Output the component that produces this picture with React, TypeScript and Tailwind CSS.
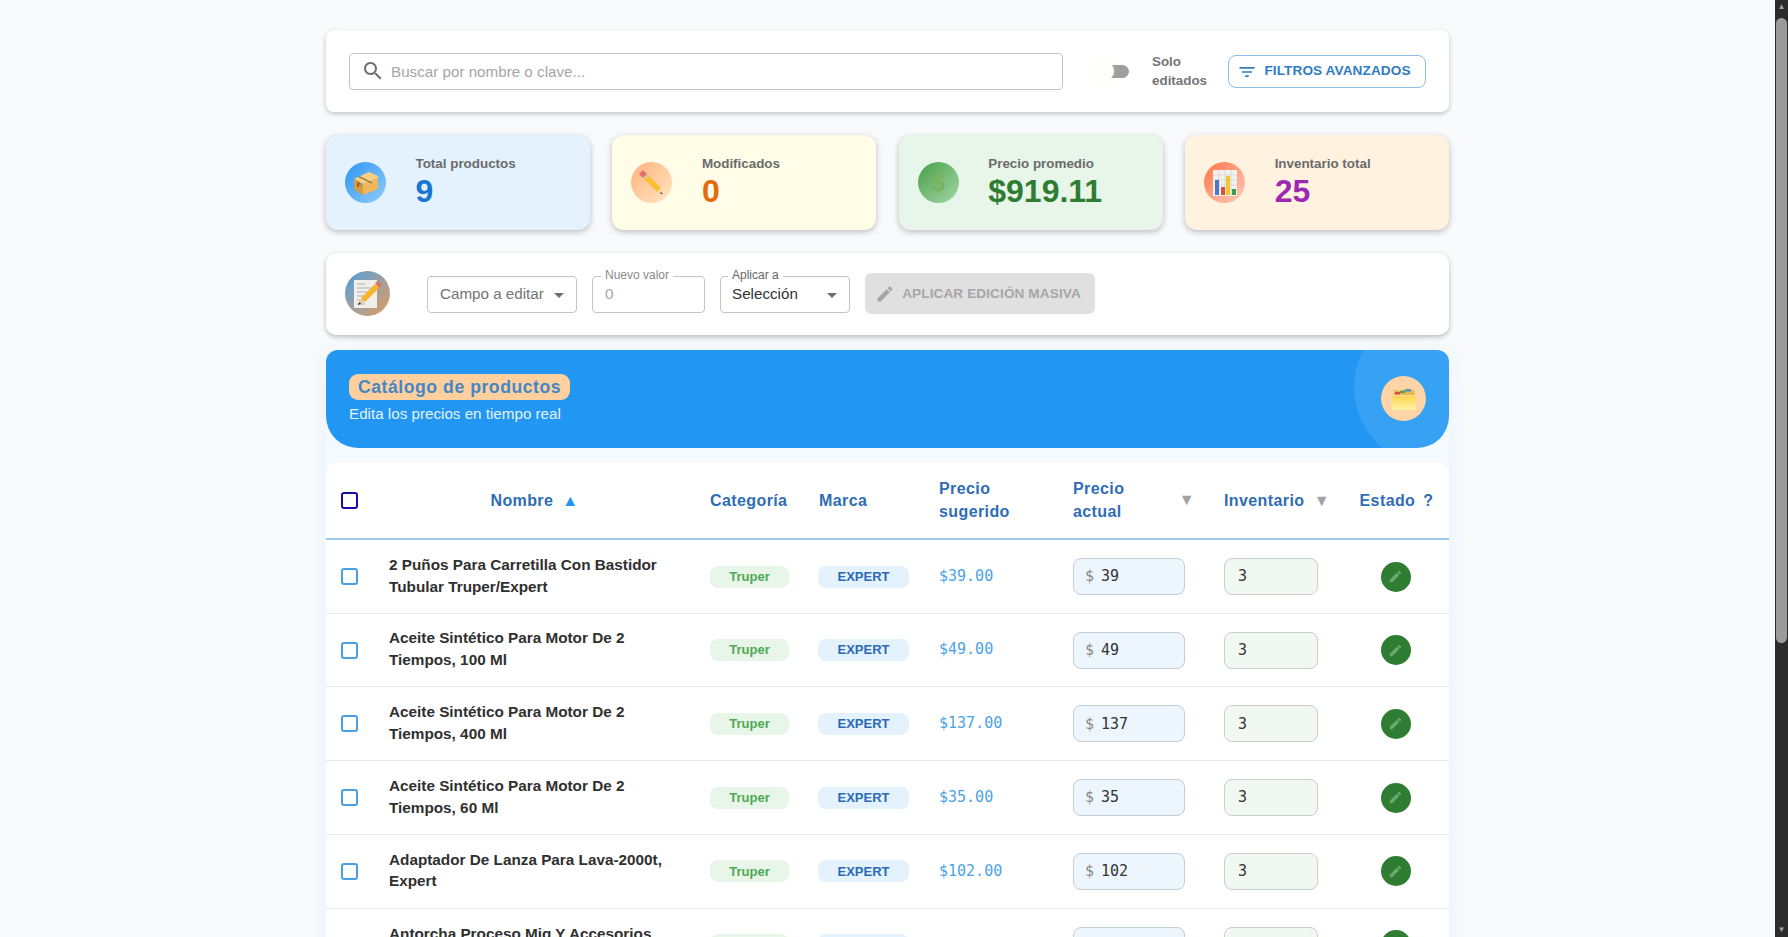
import { Fragment } from "react"

// material icon paths
const SEARCH = "M15.5 14h-.79l-.28-.27C15.41 12.59 16 11.11 16 9.5 16 5.91 13.09 3 9.5 3S3 5.91 3 9.5 5.91 16 9.5 16c1.61 0 3.09-.59 4.23-1.57l.27.28v.79l5 4.99L20.49 19l-4.99-5zm-6 0C7.01 14 5 11.99 5 9.5S7.01 5 9.5 5 14 7.01 14 9.5 11.99 14 9.5 14z"
const FILTER = "M10 18h4v-2h-4v2zM3 6v2h18V6H3zm3 7h12v-2H6v2z"
const EDIT = "M3 17.25V21h3.75L17.81 9.94l-3.75-3.75L3 17.25zM20.71 7.04c.39-.39.39-1.02 0-1.41l-2.34-2.34c-.39-.39-1.02-.39-1.41 0l-1.83 1.83 3.75 3.75 1.83-1.83z"
const ARROW = "M7 10l5 5 5-5z"

function Icon({ d, className }: { d: string; className: string }) {
    return (
        <svg viewBox="0 0 24 24" fill="currentColor" className={className}>
            <path d={d} />
        </svg>
    )
}

function BoxEmoji() {
    return (
        <svg viewBox="0 0 26 26" className="w-[26px] h-[26px]">
            <path d="M1 9 L16 2 L25 6 L25 8 L10 14 Z" fill="#f7cf85" />
            <path d="M1 9 L10 14 L10 25 L1 19 Z" fill="#d79a45" />
            <path d="M10 14 L25 8 L25 19 L10 25 Z" fill="#efb65a" />
            <path d="M6 6.6 L19 13 M4 12 L8 14.5" stroke="#8a6a35" strokeWidth="1.2" fill="none" />
            <path d="M5 13.5 L5 17" stroke="#7a5a30" strokeWidth="1.6" />
        </svg>
    )
}

function PencilEmoji() {
    return (
        <svg viewBox="0 0 28 28" className="w-[28px] h-[28px]">
            <path d="M1 5 L5 1 L9 5 L5 9 Z" fill="#e2706d" />
            <path d="M5 9 L9 5 L10.5 6.5 L6.5 10.5 Z" fill="#c9c2b0" />
            <path d="M6.5 10.5 L10.5 6.5 L23 19 L19 23 Z" fill="#fbc02d" />
            <path d="M19 23 L23 19 L25 25 Z" fill="#f0d6a8" />
            <path d="M23 23 L25 25 L22 24.4 Z" fill="#444" />
        </svg>
    )
}

function ChartEmoji() {
    return (
        <svg viewBox="0 0 24 26" className="w-[24px] h-[26px]">
            <rect x="0" y="0" width="24" height="26" fill="#f3f1ee" />
            <path d="M0 5H24M0 10H24M0 15H24M0 20H24M6 0V26M12 0V26M18 0V26" stroke="#d2cfcc" strokeWidth="0.6" />
            <rect x="2" y="10" width="4" height="15" fill="#4a78c9" />
            <rect x="8" y="17" width="4" height="8" fill="#d9503f" />
            <rect x="13" y="6" width="4" height="19" fill="#f0c52e" />
            <rect x="19" y="19" width="4" height="6" fill="#3f9a4c" />
        </svg>
    )
}

function MemoEmoji() {
    return (
        <svg viewBox="0 0 30 30" className="w-[30px] h-[30px]">
            <rect x="1" y="1" width="23" height="28" fill="#f1efe9" />
            <path d="M4 5H12M4 9H21M4 13H21M4 17H14M4 21H10M4 25H12" stroke="#a9b0b5" strokeWidth="1" />
            <path d="M22 4 L25 2 L29 6 L26 9 Z" fill="#e2706d" />
            <path d="M22 5 L26 9 L12 23 L8 19 Z" fill="#f6b32b" />
            <path d="M8 19 L12 23 L5 26 Z" fill="#e8cfa0" />
            <path d="M6.4 23 L8 24.8 L5 26 Z" fill="#333" />
        </svg>
    )
}

function FolderEmoji() {
    return (
        <svg viewBox="0 0 26 22" className="w-[26px] h-[22px]">
            <defs>
                <linearGradient id="folderBody" x1="0" y1="0" x2="0" y2="1">
                    <stop offset="0" stopColor="#ffd54f" />
                    <stop offset="1" stopColor="#fff3a6" />
                </linearGradient>
            </defs>
            <path d="M3 7 L3 2 L10 3 L16 0.5 L23 2 L24 7 Z" fill="#e8b84a" />
            <rect x="4" y="4" width="5" height="2.4" fill="#d9503f" />
            <rect x="9" y="2.6" width="5" height="2.4" fill="#55a04f" />
            <rect x="14" y="1.2" width="6" height="2.4" fill="#5b8fd0" />
            <path d="M1 8 H25 V22 H1 Z" fill="url(#folderBody)" />
        </svg>
    )
}

const stats = [
    { label: "Total productos", value: "9", card: "bg-[#e3f2fd]", text: "text-[#1976d2]", circle: "from-[#2196f3] to-[#90caf9]", icon: <BoxEmoji /> },
    { label: "Modificados", value: "0", card: "bg-[#fffde7]", text: "text-[#e66a0c]", circle: "from-[#ffb27a] to-[#ffe6c4]", icon: <PencilEmoji /> },
    { label: "Precio promedio", value: "$919.11", card: "bg-[#e8f5e9]", text: "text-[#2e7d32]", circle: "from-[#43a047] to-[#a5d6a7]", icon: <span className="text-[24px] font-bold leading-none text-[#7ab35c]">$</span> },
    { label: "Inventario total", value: "25", card: "bg-[#fff3e0]", text: "text-[#9c27b0]", circle: "from-[#ff7043] to-[#ffccbc]", icon: <ChartEmoji /> },
]

// the last row is cut by the window, only its first line shows
const products = [
    { name: "2 Puños Para Carretilla Con Bastidor Tubular Truper/Expert", price: "39" },
    { name: "Aceite Sintético Para Motor De 2 Tiempos, 100 Ml", price: "49" },
    { name: "Aceite Sintético Para Motor De 2 Tiempos, 400 Ml", price: "137" },
    { name: "Aceite Sintético Para Motor De 2 Tiempos, 60 Ml", price: "35" },
    { name: "Adaptador De Lanza Para Lava-2000t, Expert", price: "102" },
    { name: "Antorcha Proceso Mig Y Accesorios\n\u00a0", price: "" },
]

function Checkbox({ header }: { header?: boolean }) {
    return (
        <div className={`w-[17px] h-[17px] rounded-[3px] border-2 ${header ? "border-[#1a0fa5]" : "border-[#4a9fe3]"}`} />
    )
}

function Sort({ up }: { up?: boolean }) {
    return <span className={`text-[16px] ${up ? "text-[#2196f3]" : "text-[#a3a3a3]"}`}>{up ? "▲" : "▼"}</span>
}

export default function App() {
    return (
        <div className="flex h-screen overflow-hidden bg-[#f8fafc] font-['Liberation_Sans',Arial,sans-serif]">
            <main className="flex-1 overflow-hidden">
                <div className="w-[1123px] mx-auto pt-[30px] flex flex-col">
                    <div className="bg-white rounded-[8px] h-[82px] px-[23px] flex items-center shadow-[0_2px_5px_rgba(0,0,0,0.22)]">
                        <div className="w-[714px] h-[37px] border border-[#c4c4c4] rounded-[4px] flex items-center pl-[11px] gap-[6px]">
                            <Icon d={SEARCH} className="w-[24px] h-[24px] text-[#6f6f6f]" />
                            <input placeholder="Buscar por nombre o clave..." className="flex-1 text-[15.2px] pt-[2px] outline-none placeholder:text-[#a6a6a6]" />
                        </div>
                        <div className="relative ml-[31px] w-[35px] h-[13px] flex justify-end">
                            <div className="w-[28px] h-[13px] rounded-full bg-[#9e9e9e]" />
                            <div className="absolute left-0 top-[-4px] w-[20px] h-[20px] rounded-full bg-[#fffffa] shadow-[0_0_3px_rgba(255,235,170,0.45)]" />
                        </div>
                        <div className="ml-[23px] w-[62px] text-[13.4px] leading-[19px] font-bold text-[#757575]">Solo editados</div>
                        <button className="ml-[14px] w-[198px] h-[33px] rounded-[8px] border border-[#8dbde8] pr-[6px] pt-[1px] flex items-center justify-center gap-[7px] text-[#2f7bc4] text-[13.6px] font-bold tracking-[0.1px]">
                            <Icon d={FILTER} className="w-[20px] h-[20px]" />
                            FILTROS AVANZADOS
                        </button>
                    </div>

                    <div className="mt-[23px] grid grid-cols-4 gap-[22.5px]">
                        {stats.map((s) => (
                            <div key={s.label} className={`${s.card} h-[95px] rounded-[12px] flex items-center pl-[19px] shadow-[0_2px_6px_rgba(0,0,0,0.25)]`}>
                                <div className={`w-[41px] h-[41px] rounded-full bg-linear-to-br ${s.circle} flex items-center justify-center`}>
                                    {s.icon}
                                </div>
                                <div className="ml-[29.5px] mt-[-4px]">
                                    <div className="text-[13.4px] leading-[20px] font-bold text-[#6b6b6b]">{s.label}</div>
                                    <div className={`text-[32px] leading-[34px] font-bold ${s.text}`}>{s.value}</div>
                                </div>
                            </div>
                        ))}
                    </div>

                    <div className="mt-[23px] bg-white rounded-[10px] h-[82px] pl-[19px] pb-[1px] flex items-center shadow-[0_2px_5px_rgba(0,0,0,0.25)]">
                        <div className="w-[45px] h-[45px] rounded-full bg-linear-to-br from-[#3e9bdc] to-[#e09a55] flex items-center justify-center">
                            <MemoEmoji />
                        </div>
                        <div className="ml-[37px] mt-[2px] w-[150px] h-[37px] border border-[#c4c4c4] rounded-[4px] flex items-center pl-[12px] pr-[5px] justify-between text-[15.2px] whitespace-nowrap text-[#757575]">
                            Campo a editar
                            <Icon d={ARROW} className="w-[24px] h-[24px] text-[#6f6f6f]" />
                        </div>
                        <div className="relative ml-[15px] mt-[2px] w-[113px] h-[37px] border border-[#c4c4c4] rounded-[4px] flex items-center pl-[12px]">
                            <span className="absolute left-[8px] top-[-9px] bg-white px-[4px] text-[12px] leading-[14px] text-[#8a8a8a]">Nuevo valor</span>
                            <input placeholder="0" className="w-full text-[15.2px] outline-none placeholder:text-[#a6a6a6]" />
                        </div>
                        <div className="relative ml-[15px] mt-[2px] w-[130px] h-[37px] border border-[#c4c4c4] rounded-[4px] flex items-center pl-[11px] pr-[5px] justify-between text-[15.2px] text-[#333333]">
                            <span className="absolute left-[7px] top-[-9px] bg-white px-[4px] text-[12px] leading-[14px] text-[#666666]">Aplicar a</span>
                            Selección
                            <Icon d={ARROW} className="w-[24px] h-[24px] text-[#6f6f6f]" />
                        </div>
                        <button className="ml-[15px] w-[230px] h-[41px] rounded-[6px] bg-[#e0e0e0] pr-[4px] pt-[1px] flex items-center justify-center gap-[7px] text-[#a6a6a6] text-[13.6px] font-bold tracking-[0.1px]">
                            <Icon d={EDIT} className="w-[20px] h-[20px]" />
                            APLICAR EDICIÓN MASIVA
                        </button>
                    </div>

                    <div className="mt-[15px] bg-[#f5faff] rounded-[12px] shadow-[0_4px_24px_rgba(33,150,243,0.07)]">
                        <div className="relative overflow-hidden h-[98px] bg-[#2196f3] rounded-t-[12px] rounded-b-[32px] pl-[23px] pt-[24px]">
                            <div className="absolute top-[-43px] right-[-65px] w-[160px] h-[160px] rounded-full bg-white/10" />
                            <div className="flex">
                                <div className="h-[26px] rounded-[9px] bg-[#ffcf9e] px-[9px] text-[17.6px] leading-[27px] font-bold tracking-[0.55px] text-[#4586c4]">Catálogo de productos</div>
                            </div>
                            <div className="mt-[4px] text-[15.2px] leading-[20px] text-[#e3f2fd]">Edita los precios en tiempo real</div>
                            <div className="absolute right-[23px] top-[26px] w-[45px] h-[45px] rounded-full bg-[#ffd4a6] flex items-center justify-center">
                                <FolderEmoji />
                            </div>
                        </div>

                        <div className="mt-[15px] bg-white rounded-t-[10px]">
                            <table className="w-full table-fixed">
                                <colgroup>
                                    <col className="w-[48px]" />
                                    <col className="w-[320px]" />
                                    <col className="w-[108px]" />
                                    <col className="w-[121px]" />
                                    <col className="w-[134px]" />
                                    <col className="w-[151px]" />
                                    <col className="w-[136px]" />
                                    <col />
                                </colgroup>
                                <thead>
                                    <tr className="h-[76.4px] border-b-2 border-[#9ccbef] text-[16px] leading-[23px] font-bold tracking-[0.4px] text-[#2f6db5]">
                                        <th className="pl-[15px]"><Checkbox header /></th>
                                        <th className="pl-[1px] font-bold">
                                            <div className="flex justify-center items-center gap-[9px]">Nombre <Sort up /></div>
                                        </th>
                                        <th className="pl-[16px] text-left font-bold">Categoría</th>
                                        <th className="pl-[17px] text-left font-bold">Marca</th>
                                        <th className="pl-[16px] pb-[2px] text-left font-bold">Precio<br />sugerido</th>
                                        <th className="px-[16px] pb-[2px] text-left font-bold">
                                            <div className="flex justify-between items-center">
                                                <span>Precio<br />actual</span>
                                                <span className="mr-[-3px]"><Sort /></span>
                                            </div>
                                        </th>
                                        <th className="px-[16px] text-left font-bold">
                                            <div className="flex justify-between items-center">Inventario <span className="mr-[-2px]"><Sort /></span></div>
                                        </th>
                                        <th colSpan={2} className="font-bold">
                                            <div className="flex justify-center gap-[8px]">Estado <span>?</span></div>
                                        </th>
                                    </tr>
                                </thead>
                                <tbody>
                                    {products.map((p) => (
                                        <Fragment key={p.name}>
                                            <tr className="h-[73.8px] border-b border-[#e6e8ea]">
                                                <td className="pl-[15px]"><Checkbox /></td>
                                                <td className="pl-[15px] pr-[16px] pb-[2px] text-[15.3px] leading-[21.7px] font-bold text-[#303030] whitespace-pre-line">{p.name}</td>
                                                <td className="pl-[16px]">
                                                    <div className="w-[79px] h-[22px] rounded-[8px] bg-[#e8f5e9] text-[#4fa954] text-[13px] font-bold flex items-center justify-center">Truper</div>
                                                </td>
                                                <td className="pl-[16px]">
                                                    <div className="w-[91px] h-[22px] rounded-[8px] bg-[#e3f2fd] text-[#2a6ab5] text-[13px] font-bold flex items-center justify-center">EXPERT</div>
                                                </td>
                                                <td className="pl-[16px] pb-[1px] font-['DejaVu_Sans_Mono',monospace] text-[15px] text-[#4aa3e8]">{p.price ? `$${p.price}.00` : ""}</td>
                                                <td className="pl-[16px]">
                                                    <div className="w-[112px] h-[37px] rounded-[8px] border border-[#c4ccd4] bg-[#eef6fd] flex items-center pl-[11px] gap-[7px] font-['DejaVu_Sans_Mono',monospace] text-[15px] text-[#333333]">
                                                        <span className="text-[#8a8a8a]">$</span>
                                                        <input defaultValue={p.price} className="w-[70px] outline-none" />
                                                    </div>
                                                </td>
                                                <td className="pl-[16px]">
                                                    <div className="w-[94px] h-[37px] rounded-[8px] border border-[#c8cfca] bg-[#f1f8f2] flex items-center pl-[13px] font-['DejaVu_Sans_Mono',monospace] text-[15px] text-[#333333]">
                                                        <input defaultValue="3" className="w-[60px] outline-none" />
                                                    </div>
                                                </td>
                                                <td colSpan={2} className="pr-[2px]">
                                                    <div className="mx-auto w-[30px] h-[30px] rounded-full bg-[#2e7d32] flex items-center justify-center">
                                                        <Icon d={EDIT} className="w-[15px] h-[15px] text-[#6cab70]" />
                                                    </div>
                                                </td>
                                            </tr>
                                        </Fragment>
                                    ))}
                                </tbody>
                            </table>
                        </div>
                    </div>
                </div>
            </main>

            <div className="w-[13px] h-full bg-[#2c2c2c] flex flex-col items-center shrink-0">
                <div className="h-[14px] flex items-center justify-center text-[8px] text-[#a0a0a0]">▲</div>
                <div className="w-[11px] h-[625px] mt-[4px] rounded-[6px] bg-[#9b9b9b]" />
                <div className="mt-auto h-[14px] flex items-center justify-center text-[8px] text-[#a0a0a0]">▼</div>
            </div>
        </div>
    )
}
